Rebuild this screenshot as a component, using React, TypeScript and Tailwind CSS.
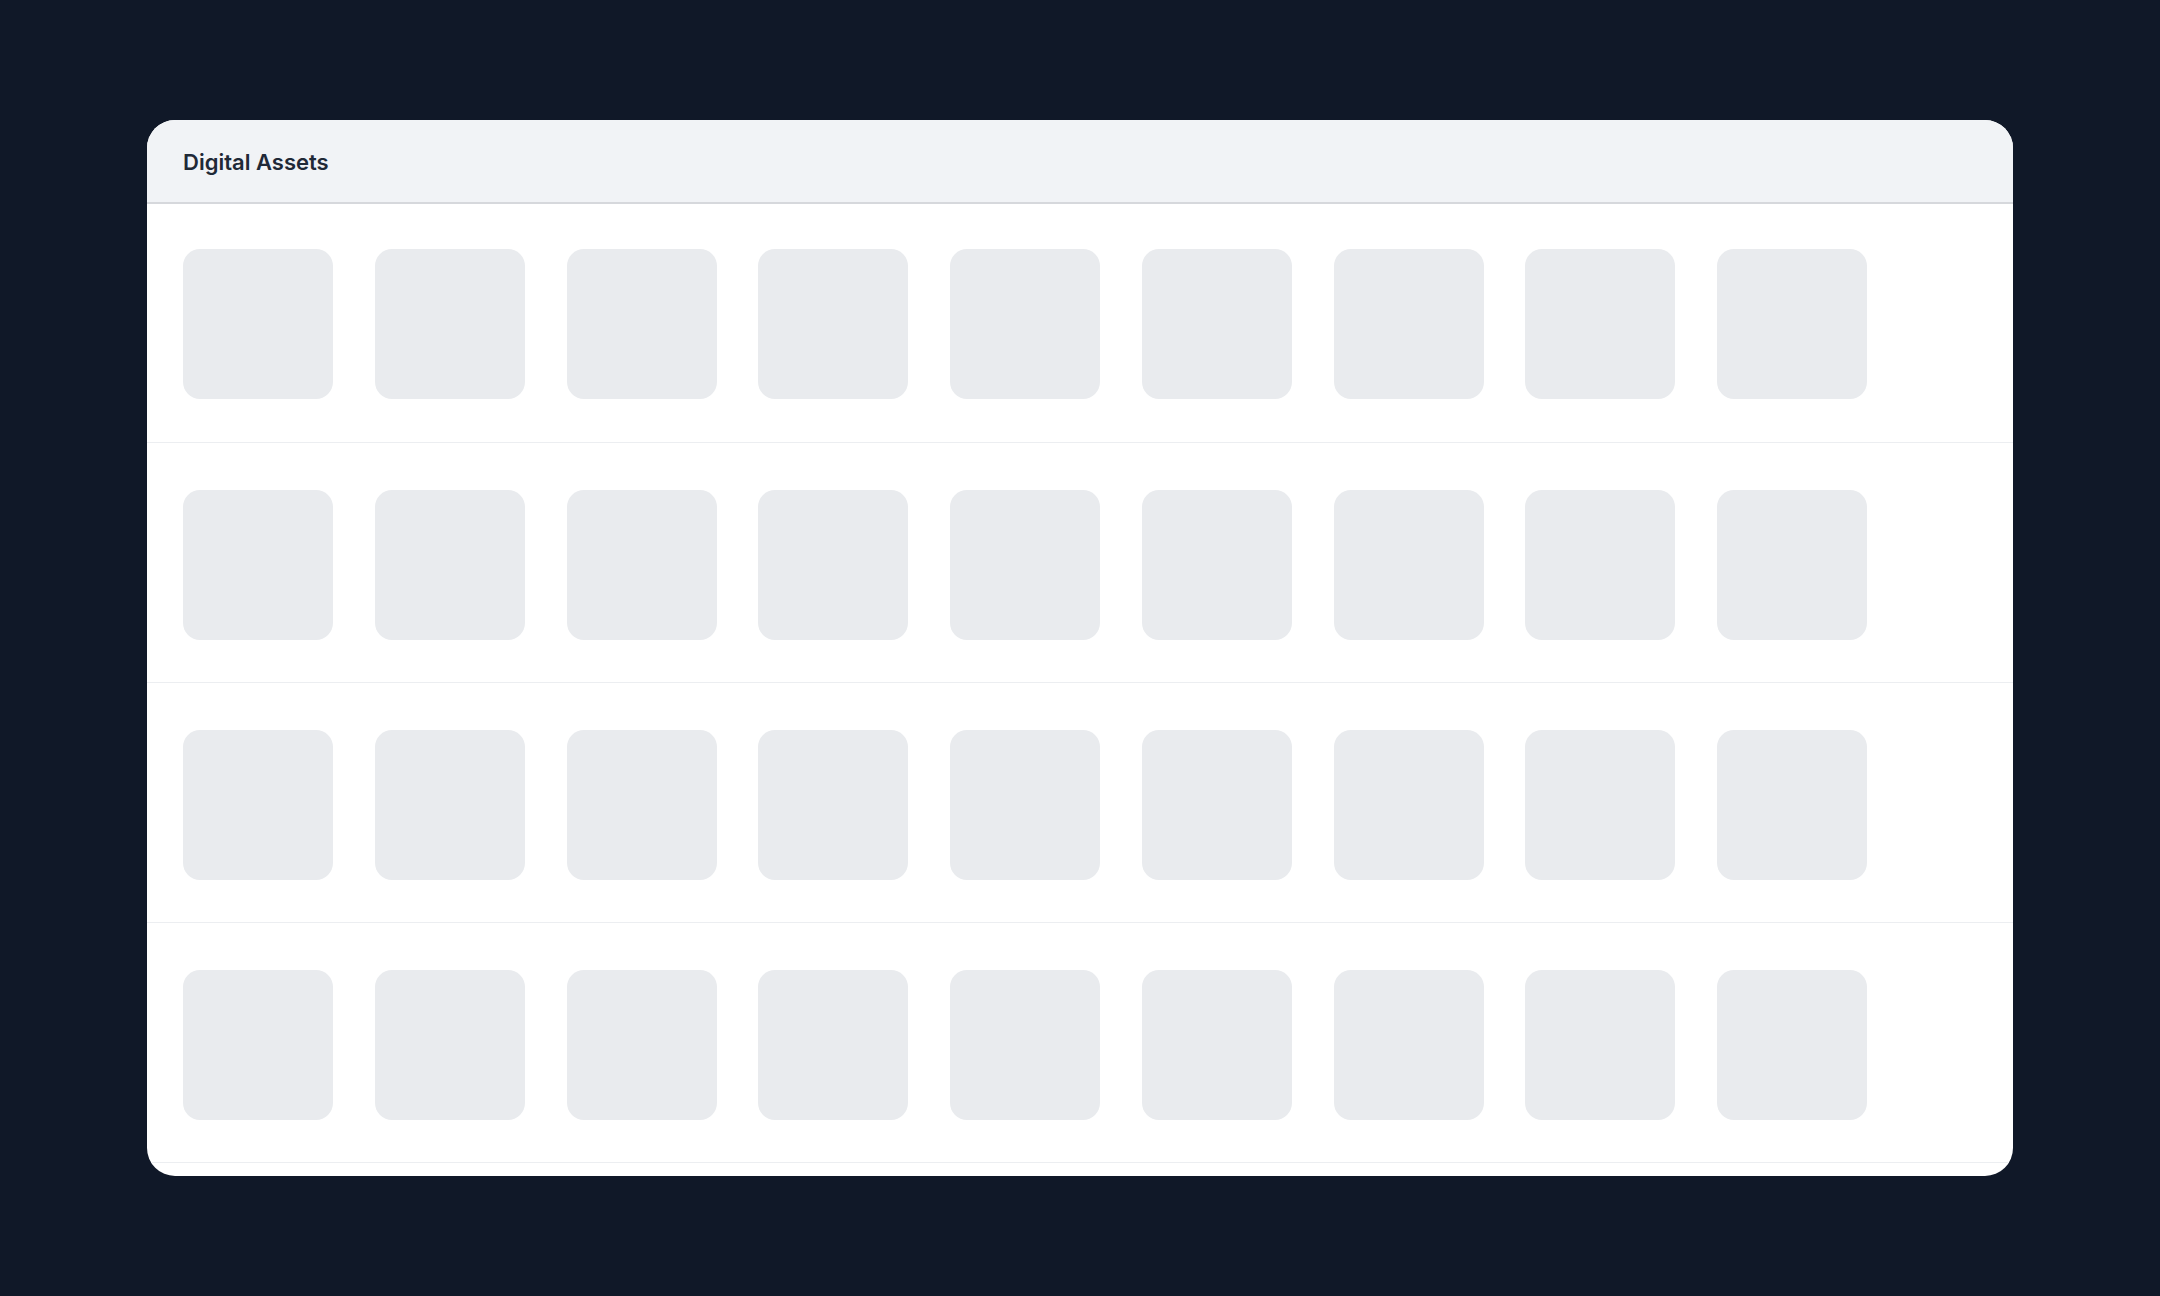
import React from "react";

const rows = [0, 1, 2, 3];
const cols = [0, 1, 2, 3, 4, 5, 6, 7, 8];

export default function App() {
  return (
    <div className="min-h-screen w-full bg-[#101828] flex items-center justify-center" style={{ fontFamily: "Inter, 'Noto Sans', sans-serif" }}>
      <div className="w-[1866px] h-[1056px] bg-white rounded-[28px] overflow-hidden flex flex-col">
        <div className="h-[84px] shrink-0 bg-[#f1f3f6] border-b-2 border-[#d6d8dc] flex items-center px-[36px] pt-[2px]">
          <span className="text-[22px] font-semibold text-[#1f2937]">Digital Assets</span>
        </div>
        {rows.map((r) => (
          <div
            key={r}
            className={
              r === 0
                ? "shrink-0 h-[239px] border-b border-[#eceef1] px-[36px] pt-[45px] flex gap-[41.75px]"
                : "shrink-0 h-[240px] border-b border-[#eceef1] px-[36px] pt-[47px] flex gap-[41.75px]"
            }
          >
            {cols.map((c) => (
              <div key={c} className="w-[150px] h-[150px] shrink-0 rounded-[17px] bg-[#e9ebee]" />
            ))}
          </div>
        ))}
      </div>
    </div>
  );
}
